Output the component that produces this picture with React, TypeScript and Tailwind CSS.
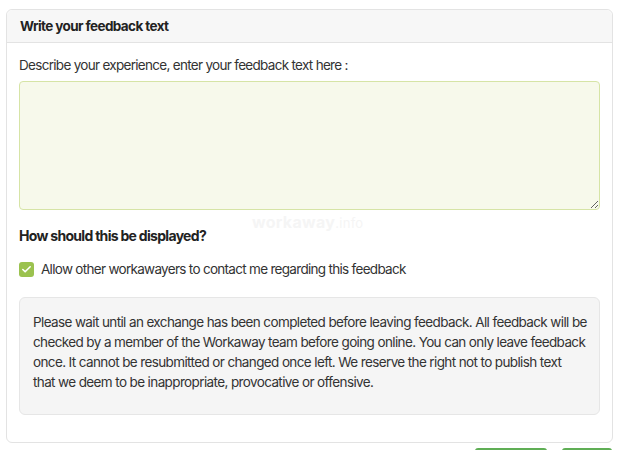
import { Check } from "lucide-react";

export default function App() {
  return (
    <div
      className="relative w-[619px] h-[450px] overflow-hidden bg-white text-[#2b2b2b]"
      style={{ fontFamily: "Inter, 'Noto Sans', sans-serif" }}
    >
      <div className="pt-[9px] px-[6px]">
        {/* Card */}
        <div className="rounded-md border border-[#e3e3e3] bg-white">
          <div className="h-[33px] flex items-center px-[13px] bg-[#f7f7f7] border-b border-[#e3e3e3] rounded-t-md">
            <h2 className="text-[13.5px] font-bold tracking-[-0.6px] text-[#222]">Write your feedback text</h2>
          </div>
          <div className="px-[12px] pt-[12px] pb-[27px]">
            <label className="block text-[13.5px] tracking-[-0.7px] text-[#333] leading-5">
              Describe your experience, enter your feedback text here :
            </label>
            <textarea className="mt-[6px] block w-full h-[129px] rounded bg-[#f7f9eb] border border-[#d6e4a6] outline-none resize-y" />
            <div className="relative">
              <span className="absolute left-[233px] top-[0px] text-[#f5f5f5] text-[16px] font-bold tracking-[0.3px] select-none">
                workaway<span className="text-[13px] font-normal">.info</span>
              </span>
            </div>
            <h3 className="mt-[16px] text-[14px] font-bold tracking-[-0.7px] text-[#222] leading-5">
              How should this be displayed?
            </h3>
            <div className="mt-[13px] flex items-center gap-[7px]">
              <span className="w-[15px] h-[15px] rounded-[3px] bg-[#9bc24f] flex items-center justify-center">
                <Check className="w-[11px] h-[11px] text-white" strokeWidth={3.5} />
              </span>
              <span className="text-[13.5px] tracking-[-0.7px] text-[#333]">
                Allow other workawayers to contact me regarding this feedback
              </span>
            </div>
            <div className="mt-[18px] h-[118px] rounded-md bg-[#f5f5f5] border border-[#e6e6e6] pl-[13px] pr-[4px] pt-[14px]">
              <p className="text-[13.5px] tracking-[-0.62px] leading-[20px] text-[#333] whitespace-nowrap">
                Please wait until an exchange has been completed before leaving feedback. All feedback will be
                <br />
                checked by a member of the Workaway team before going online. You can only leave feedback
                <br />
                once. It cannot be resubmitted or changed once left. We reserve the right not to publish text
                <br />
                that we deem to be inappropriate, provocative or offensive.
              </p>
            </div>
          </div>
        </div>
        <div className="flex justify-end gap-[15px] pr-[1px] mt-[5px]">
          <button className="w-[72px] h-[32px] rounded-[3px] bg-[#76bb66] border-t-2 border-[#5fae55]" />
          <button className="w-[50px] h-[32px] rounded-[3px] bg-[#76bb66] border-t-2 border-[#5fae55]" />
        </div>
      </div>
    </div>
  );
}
